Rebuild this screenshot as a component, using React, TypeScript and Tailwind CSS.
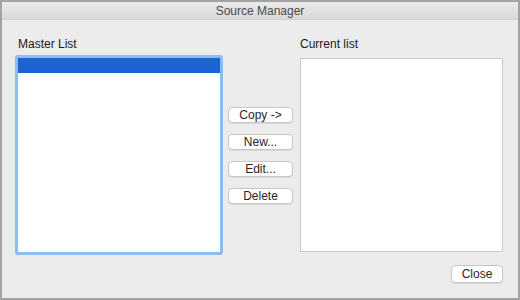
const font = { fontFamily: '"Liberation Sans", Arial, sans-serif' };

function MacButton({ label, className = "" }: { label: string; className?: string }) {
  return (
    <button
      className={`flex items-center justify-center rounded-[4px] border border-[#c6c6c6] bg-white text-[12px] leading-none text-[#262626] shadow-[0_1px_0_rgba(0,0,0,0.08)] ${className}`}
    >
      {label}
    </button>
  );
}

export default function App() {
  return (
    <div
      className="flex h-[300px] w-[520px] flex-col border-2 border-[#a3a3a3] bg-[#ececec]"
      style={font}
    >
      <div className="flex h-[18px] shrink-0 items-center justify-center border-b border-[#d0d0d0] bg-gradient-to-b from-[#ebebeb] to-[#d8d8d8] text-[12px] text-[#4a4a4a]">
        Source Manager
      </div>

      <div className="flex pl-[16px] pt-[17px]">
        <div className="flex w-[202px] flex-col">
          <div className="h-[15px] text-[12px] leading-[15px] text-[#1a1a1a]">Master List</div>
          <div className="mt-[6px] h-[194px] rounded-[1px] bg-white ring-[3px] ring-[#8cbdf0]">
            <div className="h-[15px] bg-[#1c64d6]" />
          </div>
        </div>

        <div className="ml-[8px] flex w-[65px] flex-col gap-[11px] pt-[70px]">
          <MacButton label="Copy ->" className="h-[16px]" />
          <MacButton label="New..." className="h-[16px]" />
          <MacButton label="Edit..." className="h-[16px]" />
          <MacButton label="Delete" className="h-[16px]" />
        </div>

        <div className="ml-[7px] flex w-[203px] flex-col">
          <div className="h-[15px] text-[12px] leading-[15px] text-[#1a1a1a]">Current list</div>
          <div className="mt-[6px] h-[194px] border border-[#cbcbcb] bg-white" />
        </div>
      </div>

      <div className="flex justify-end pr-[15px] pt-[13px]">
        <MacButton label="Close" className="h-[18px] w-[52px]" />
      </div>
    </div>
  );
}
